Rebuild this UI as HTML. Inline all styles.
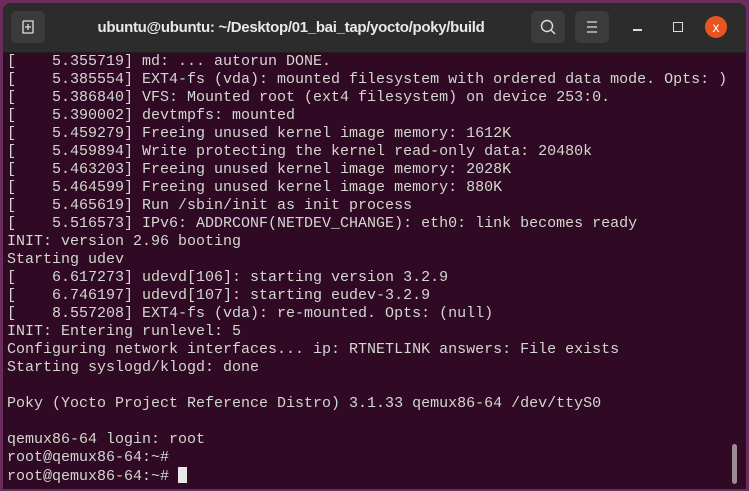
<!DOCTYPE html>
<html><head><style>
html,body{margin:0;padding:0;width:749px;height:491px;overflow:hidden;background:#6b2d5c;}
.win{position:absolute;left:3px;top:3px;width:743px;height:486px;background:#300a24;border-radius:8px 8px 0 0;overflow:hidden;}
.tb{position:absolute;left:0;top:0;width:743px;height:49px;background:#2c2c2c;border-bottom:1px solid #1e1e1e;}
.btn{position:absolute;top:8px;width:34px;height:32px;background:#3b3b3b;border-radius:5px;}
.title{position:absolute;top:16px;text-align:center;color:#e8e8e8;font:bold 15px "Liberation Sans",sans-serif;letter-spacing:-0.3px;}
.term{position:absolute;left:4px;top:50px;margin:0;font:15px/18px "Liberation Mono",monospace;color:#d3d7cf;white-space:pre;}
.cur{display:inline-block;width:9px;height:16px;background:#e8e8e8;vertical-align:-3px;}
.sb{position:absolute;left:729px;top:441px;width:5px;height:40px;background:#9a8a95;border-radius:3px;}
</style></head><body>
<div class="win">
<div class="tb">
<div class="btn" style="left:8px"><svg width="34" height="32"><path d="M12 10v12h10M12 10h10v12" fill="none" stroke="#ddd" stroke-width="1.3"/><path d="M17 13v6M14 16h6" stroke="#ddd" stroke-width="1.3"/></svg></div>
<div class="title" style="left:48px;width:480px">ubuntu@ubuntu: ~/Desktop/01_bai_tap/yocto/poky/build</div>
<div class="btn" style="left:528px"><svg width="34" height="32"><circle cx="16" cy="15" r="5.5" fill="none" stroke="#ddd" stroke-width="1.4"/><path d="M20 19l4 4" stroke="#ddd" stroke-width="1.4"/></svg></div>
<div class="btn" style="left:572px"><svg width="34" height="32"><path d="M12 11h10M12 16h10M12 21h10" stroke="#ddd" stroke-width="1.3"/></svg></div>
<div style="position:absolute;left:630px;top:26px;width:9px;height:1.5px;background:#ddd"></div>
<div style="position:absolute;left:670px;top:19px;width:8px;height:8px;border:1.3px solid #ddd"></div>
<div style="position:absolute;left:702px;top:13px;width:22px;height:22px;border-radius:50%;background:#e95420;color:#fff;font:14px/22px 'Liberation Sans',sans-serif;text-align:center">x</div>
</div>
<pre class="term">[    5.355719] md: ... autorun DONE.
[    5.385554] EXT4-fs (vda): mounted filesystem with ordered data mode. Opts: )
[    5.386840] VFS: Mounted root (ext4 filesystem) on device 253:0.
[    5.390002] devtmpfs: mounted
[    5.459279] Freeing unused kernel image memory: 1612K
[    5.459894] Write protecting the kernel read-only data: 20480k
[    5.463203] Freeing unused kernel image memory: 2028K
[    5.464599] Freeing unused kernel image memory: 880K
[    5.465619] Run /sbin/init as init process
[    5.516573] IPv6: ADDRCONF(NETDEV_CHANGE): eth0: link becomes ready
INIT: version 2.96 booting
Starting udev
[    6.617273] udevd[106]: starting version 3.2.9
[    6.746197] udevd[107]: starting eudev-3.2.9
[    8.557208] EXT4-fs (vda): re-mounted. Opts: (null)
INIT: Entering runlevel: 5
Configuring network interfaces... ip: RTNETLINK answers: File exists
Starting syslogd/klogd: done

Poky (Yocto Project Reference Distro) 3.1.33 qemux86-64 /dev/ttyS0

qemux86-64 login: root
root@qemux86-64:~#
root@qemux86-64:~# <span class="cur"></span></pre>
<div class="sb"></div>
</div>
</body></html>
